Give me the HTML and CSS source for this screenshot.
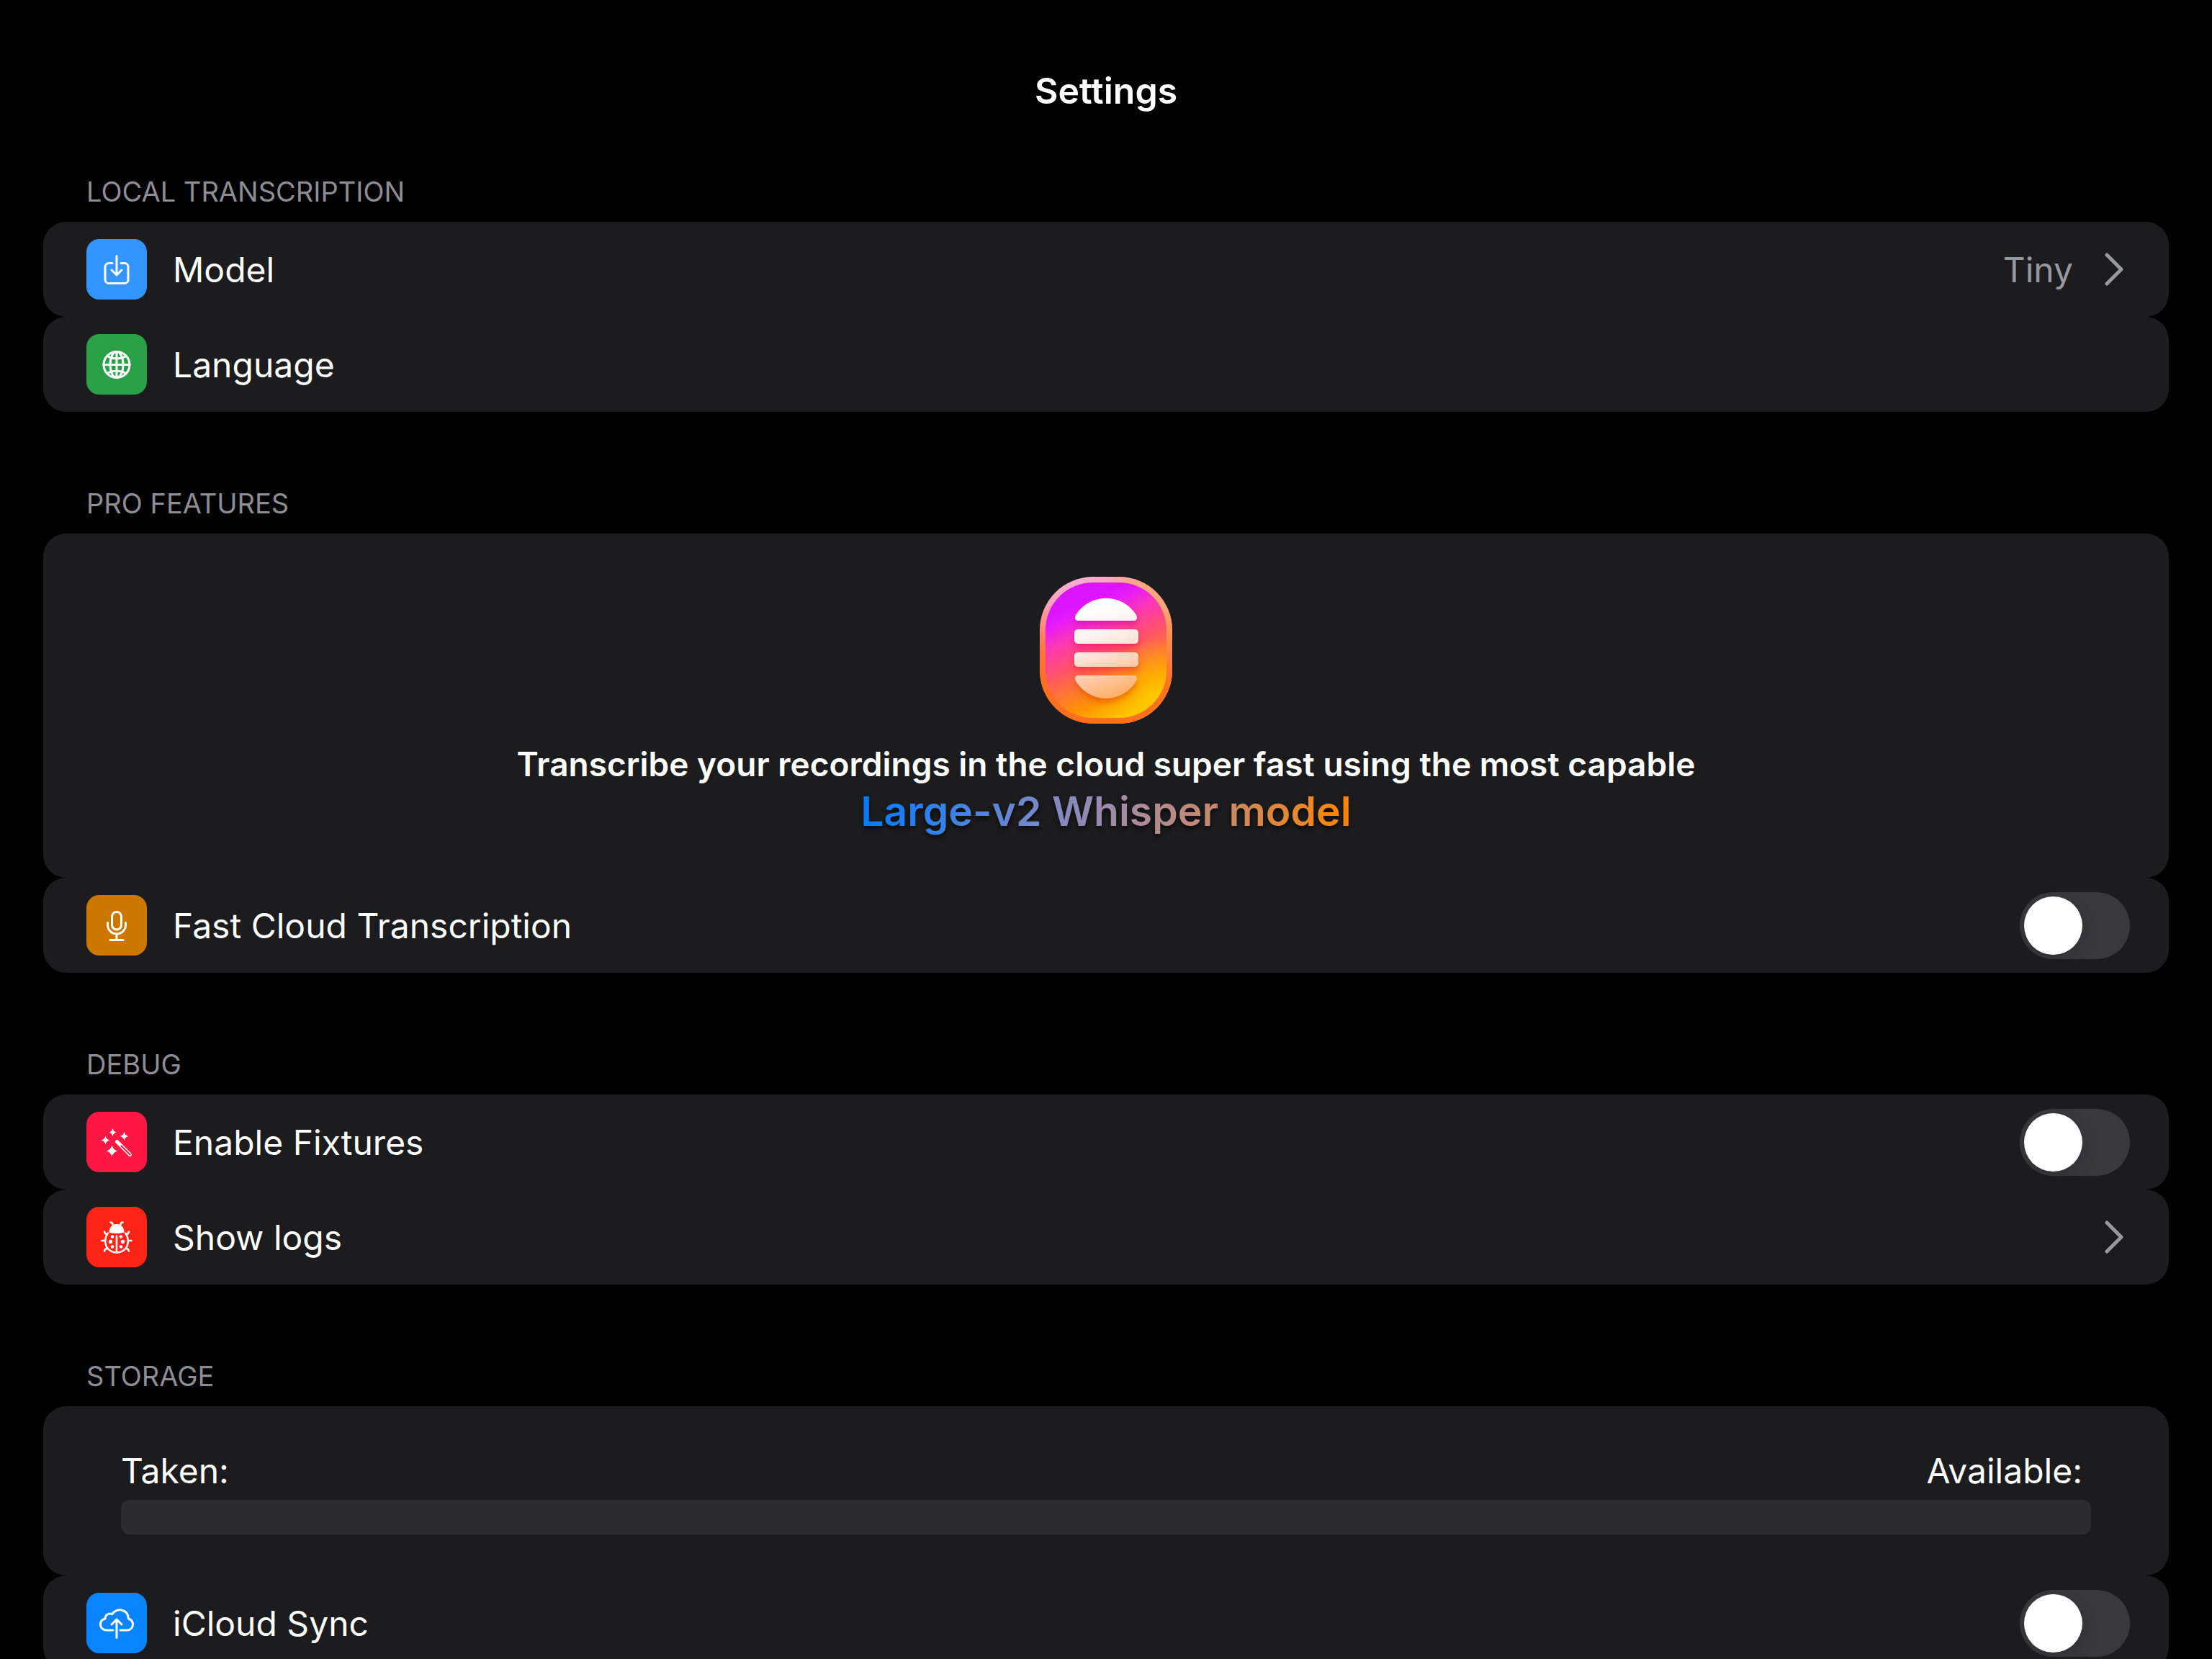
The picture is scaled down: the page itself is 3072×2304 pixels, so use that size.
FILE: index.html
```html
<!DOCTYPE html>
<html lang="en">
<head>
<meta charset="utf-8">
<meta name="viewport" content="width=device-width, initial-scale=1">
<title>Settings</title>
<link rel="stylesheet" href="styles.css">
</head>
<body>
<main class="screen">
  <h1 class="title">Settings</h1>
  <div class="sections">

    <section class="section">
      <h2 class="section-name">LOCAL TRANSCRIPTION</h2>
      <a class="card row" href="#model">
        <svg class="icon icon-model" viewBox="0 0 84 84" aria-hidden="true"><path d="M36 33.500h-5a5 5 0 0 0-5 5v18a5 5 0 0 0 5 5h22a5 5 0 0 0 5-5v-18a5 5 0 0 0-5-5h-5M42 23.500V50M35 43l7 7 7-7"/></svg>
        <span class="label">Model</span>
        <span class="value">Tiny</span>
        <svg class="chevron" viewBox="0 0 26 46" aria-hidden="true"><path d="M3 3l20 20L3 43"/></svg>
      </a>
      <a class="card row" href="#language">
        <svg class="icon icon-language" viewBox="0 0 84 84" aria-hidden="true"><circle cx="42" cy="42.500" r="18"/><ellipse cx="42" cy="42.500" rx="9" ry="18"/><path d="M42 24.500v36M24 42.500h36M29 30.500c7 4.500 19 4.500 26 0M29 54.500c7-4.500 19-4.500 26 0"/></svg>
        <span class="label">Language</span>
      </a>
    </section>

    <section class="section">
      <h2 class="section-name">PRO FEATURES</h2>
      <div class="card promo">
        <svg class="logo" viewBox="0 0 184 204" role="img" aria-label="App logo">
          <defs>
            <linearGradient id="rim" gradientUnits="userSpaceOnUse" x1="50" y1="0" x2="110" y2="190">
              <stop offset="0" stop-color="#fbb0d8"/><stop offset=".4" stop-color="#fd8278"/><stop offset=".7" stop-color="#ff7038"/><stop offset="1" stop-color="#ff761c"/>
            </linearGradient>
            <linearGradient id="rimWarm" x1="0" y1="0" x2="1" y2="0">
              <stop offset=".5" stop-color="#ffab78" stop-opacity="0"/><stop offset=".8" stop-color="#ffa878" stop-opacity=".9"/>
            </linearGradient>
            <linearGradient id="rimDown" x1="0" y1="0" x2="0" y2="1">
              <stop offset=".2" stop-color="#ff7020" stop-opacity="0"/><stop offset=".75" stop-color="#ff7020"/>
            </linearGradient>
            <linearGradient id="face" gradientUnits="userSpaceOnUse" x1="16" y1="37" x2="93" y2="209">
              <stop offset=".08" stop-color="#dc14ff"/><stop offset=".16" stop-color="#e61cfa"/><stop offset=".3" stop-color="#fc38b4"/><stop offset=".5" stop-color="#ff5468"/><stop offset=".64" stop-color="#ff7438"/><stop offset=".82" stop-color="#ff9600"/><stop offset="1" stop-color="#ffcc00"/>
            </linearGradient>
            <radialGradient id="glow" gradientUnits="userSpaceOnUse" cx="160" cy="165" r="80">
              <stop offset="0" stop-color="#ffcc00" stop-opacity=".8"/><stop offset="1" stop-color="#ffb800" stop-opacity="0"/>
            </radialGradient>
            <linearGradient id="bars" gradientUnits="userSpaceOnUse" x1="75" y1="45" x2="115" y2="170">
              <stop offset="0" stop-color="#ffffff"/><stop offset=".3" stop-color="#fff0ec"/><stop offset=".5" stop-color="#ffe0d2"/><stop offset=".7" stop-color="#ffcaa6"/><stop offset="1" stop-color="#ffaa5e"/>
            </linearGradient>
            <filter id="soft" x="-30%" y="-30%" width="160%" height="160%"><feGaussianBlur stdDeviation="5"/></filter>
          </defs>
          <rect width="184" height="204" rx="74" fill="url(#rim)"/>
          <rect width="184" height="204" rx="74" fill="url(#rimWarm)"/>
          <rect width="184" height="204" rx="74" fill="url(#rimDown)"/>
          <rect x="8" y="8" width="168" height="188" rx="66" fill="url(#face)"/>
          <rect x="8" y="8" width="168" height="188" rx="66" fill="url(#glow)"/>
          <g filter="url(#soft)" opacity=".55">
            <path fill="#c800a0" d="M53 66C45 66 50 57 54 53C72 30 112 30 130 53C134 57 139 66 131 66Z"/>
            <rect fill="#e8105c" x="48" y="79" width="89" height="20" rx="5"/>
            <rect fill="#f02030" x="48" y="111" width="89" height="20" rx="5"/>
            <path fill="#d84400" d="M53 143C48 143 48 150 54 156C72 180 112 180 130 156C136 150 136 143 131 143Z"/>
          </g>
          <g fill="url(#bars)">
            <path d="M53 61C49 61 48 57 50 53C70 22 114 22 134 53C136 57 135 61 131 61Z"/>
            <rect x="48" y="73" width="89" height="20" rx="5"/>
            <rect x="48" y="105" width="89" height="20" rx="5"/>
            <path d="M53 137C49 137 48 141 50 145C70 177 114 177 134 145C136 141 135 137 131 137Z"/>
          </g>
        </svg>
        <p class="pitch">Transcribe your recordings in the cloud super fast using the most capable</p>
        <p class="model-name">Large-v2 Whisper model</p>
      </div>
      <label class="card row">
        <svg class="icon icon-cloud" viewBox="0 0 84 84" aria-hidden="true"><rect x="35.500" y="23.500" width="13" height="24.500" rx="6.500"/><path d="M29.500 38.500v3a12.500 12.500 0 0 0 25 0v-3M42 54v8M33 62.500h18"/></svg>
        <span class="label">Fast Cloud Transcription</span>
        <input class="switch" type="checkbox" role="switch">
      </label>
    </section>

    <section class="section">
      <h2 class="section-name">DEBUG</h2>
      <label class="card row">
        <svg class="icon icon-fixtures" viewBox="0 0 84 84" aria-hidden="true"><g class="solid"><path d="M36.500 23q1 4.500 5 5.500-4 1-5 5.500-1-4.500-5-5.500 4-1 5-5.500zM52.500 28q1 5 6 6-5 1-6 6-1-5-6-6 5-1 6-6zM26.500 33.500q1 5 6 6-5 1-6 6-1-5-6-6 5-1 6-6zM35.500 46.500q1.500 6.500 8 8-6.500 1.500-8 8-1.500-6.500-8-8 6.500-1.500 8-8z"/></g><path class="wand" d="M42.500 41.500l18 18"/><path class="wand-core" d="M48.500 47.500l12 12"/></svg>
        <span class="label">Enable Fixtures</span>
        <input class="switch" type="checkbox" role="switch">
      </label>
      <a class="card row" href="#logs">
        <svg class="icon icon-logs" viewBox="0 0 84 84" aria-hidden="true"><path class="bug-lines" d="M30 36.500c-2.500 3-3.800 7-3.800 11.500 0 9 6.800 15.500 15.800 15.500S57.800 57 57.800 48c0-4.500-1.300-8.500-3.800-11.500M42 40.500v22M33.500 21.500q3 .5 3.500 4M50.500 21.500q-3 .5-3.500 4M25 34.500q.5 3 4 4M59 34.500q-.5 3-4 4M21.500 47h4M58.500 47h4M25 61.500q.5-3 4-4M59 61.500q-.5-3-4-4"/><g class="solid"><path d="M31.500 35.500c0-7 4.500-11.500 10.500-11.500s10.500 4.500 10.500 11.500q-10.500 3-21 0z"/><circle cx="36" cy="41.500" r="2.300"/><circle cx="48" cy="41.500" r="2.300"/><circle cx="33.500" cy="48.500" r="2.700"/><circle cx="50.500" cy="48.500" r="2.700"/><circle cx="36" cy="55.500" r="2.300"/><circle cx="48" cy="55.500" r="2.300"/></g></svg>
        <span class="label">Show logs</span>
        <svg class="chevron" viewBox="0 0 26 46" aria-hidden="true"><path d="M3 3l20 20L3 43"/></svg>
      </a>
    </section>

    <section class="section">
      <h2 class="section-name">STORAGE</h2>
      <div class="card storage">
        <div class="storage-names">
          <span id="taken">Taken:</span>
          <span>Available:</span>
        </div>
        <progress class="meter" value="0" max="1" aria-labelledby="taken"></progress>
      </div>
      <label class="card row">
        <svg class="icon icon-sync" viewBox="0 0 84 84" aria-hidden="true"><path d="M37 52h-9c-5 0-8.500-3.500-8.500-8 0-4 2.500-7 6.500-8 0-5 4.500-8.500 10-6.500 5-8.500 21-8.500 22.500 6.500 4 1.500 6 4.500 6 8 0 4.500-3.500 8-8 8H47M42 62.500V37M35 44l7-7 7 7"/></svg>
        <span class="label">iCloud Sync</span>
        <input class="switch" type="checkbox" role="switch">
      </label>
    </section>

  </div>
</main>
</body>
</html>
```
FILE: styles.css
```css
* {
  box-sizing: border-box;
}

body {
  margin: 0;
  background: #000;
  color: #fff;
  font-family: Inter, "Liberation Sans", sans-serif;
  font-size: 48px;
  line-height: 60px;
}

h1, h2, p {
  margin: 0;
}

.screen {
  height: 100vh;
  overflow-y: auto;
  scrollbar-width: none;
  padding: 96px 60px 60px;
}

.title {
  font-size: 50px;
  font-weight: 600;
  line-height: 60px;
  text-align: center;
}

.sections {
  display: flex;
  flex-direction: column;
  gap: 103px;
  padding-top: 86px;
}

.section {
  display: flex;
  flex-direction: column;
}

.section-name {
  padding: 0 60px 18px;
  color: #8d8d93;
  font-size: 38px;
  font-weight: 400;
  line-height: 48px;
}

.card {
  background: #1c1c1e;
  border-radius: 32px;
}

.row {
  display: flex;
  align-items: center;
  min-height: 132px;
  padding: 0 54px 0 60px;
  color: inherit;
  text-decoration: none;
}

.label {
  flex: 1;
  padding: 2px 0 0 36px;
}

.value {
  padding: 2px 44px 0 0;
  color: #98989f;
}

.icon {
  width: 84px;
  height: 84px;
  border-radius: 18px;
  fill: none;
  stroke: #fff;
  stroke-width: 3;
  stroke-linecap: round;
  stroke-linejoin: round;
}

.icon .solid {
  fill: #fff;
  stroke: none;
}

.icon .wand {
  stroke-width: 5;
}

.icon .wand-core {
  stroke: #ff1744;
  stroke-width: 2;
}

.icon .bug-lines {
  stroke-width: 2.5;
}

.icon-model { background: #3395ff; }
.icon-language { background: #2aa147; }
.icon-cloud { background: #cc7800; }
.icon-fixtures { background: #ff1744; }
.icon-logs { background: #ff2418; }
.icon-sync { background: #0a84ff; }

.chevron {
  width: 26px;
  height: 46px;
  margin-right: 9px;
  fill: none;
  stroke: #98989f;
  stroke-width: 5;
  stroke-linecap: round;
  stroke-linejoin: round;
}

.switch {
  appearance: none;
  display: flex;
  width: 153px;
  height: 93px;
  margin: 0;
  padding: 6px;
  border-radius: 47px;
  background: #39383d;
  overflow: hidden;
}

.switch::before {
  content: "";
  width: 81px;
  height: 81px;
  border-radius: 50%;
  background: #fff;
  box-shadow: 0 8px 22px rgba(0, 0, 0, 0.15);
}

.switch:checked {
  justify-content: flex-end;
  background: #30d158;
}

.promo {
  display: flex;
  flex-direction: column;
  align-items: center;
  padding: 60px 60px 57px;
  text-align: center;
}

.logo {
  width: 184px;
  height: 204px;
  margin-bottom: 26px;
}

.pitch {
  font-size: 46px;
  font-weight: 600;
  line-height: 60px;
}

.model-name {
  background: linear-gradient(90deg, #007aff, #7888c8 36%, #a88ca0 55%, #cc8864 75%, #ff8500);
  background-clip: text;
  color: transparent;
  filter: drop-shadow(0 4px 3px rgba(0, 0, 0, 0.6));
  font-size: 57px;
  font-weight: 600;
  line-height: 71px;
}

.storage {
  display: flex;
  flex-direction: column;
  gap: 10px;
  padding: 60px 108px 57px;
}

.storage-names {
  display: flex;
  justify-content: space-between;
  padding-right: 12px;
}

.meter {
  appearance: none;
  display: block;
  width: 100%;
  height: 48px;
  border: 0;
  border-radius: 12px;
  background: #2c2c2e;
  overflow: hidden;
}

.meter::-webkit-progress-bar {
  background: #2c2c2e;
}

.meter::-webkit-progress-value {
  background: #0a84ff;
}
```
